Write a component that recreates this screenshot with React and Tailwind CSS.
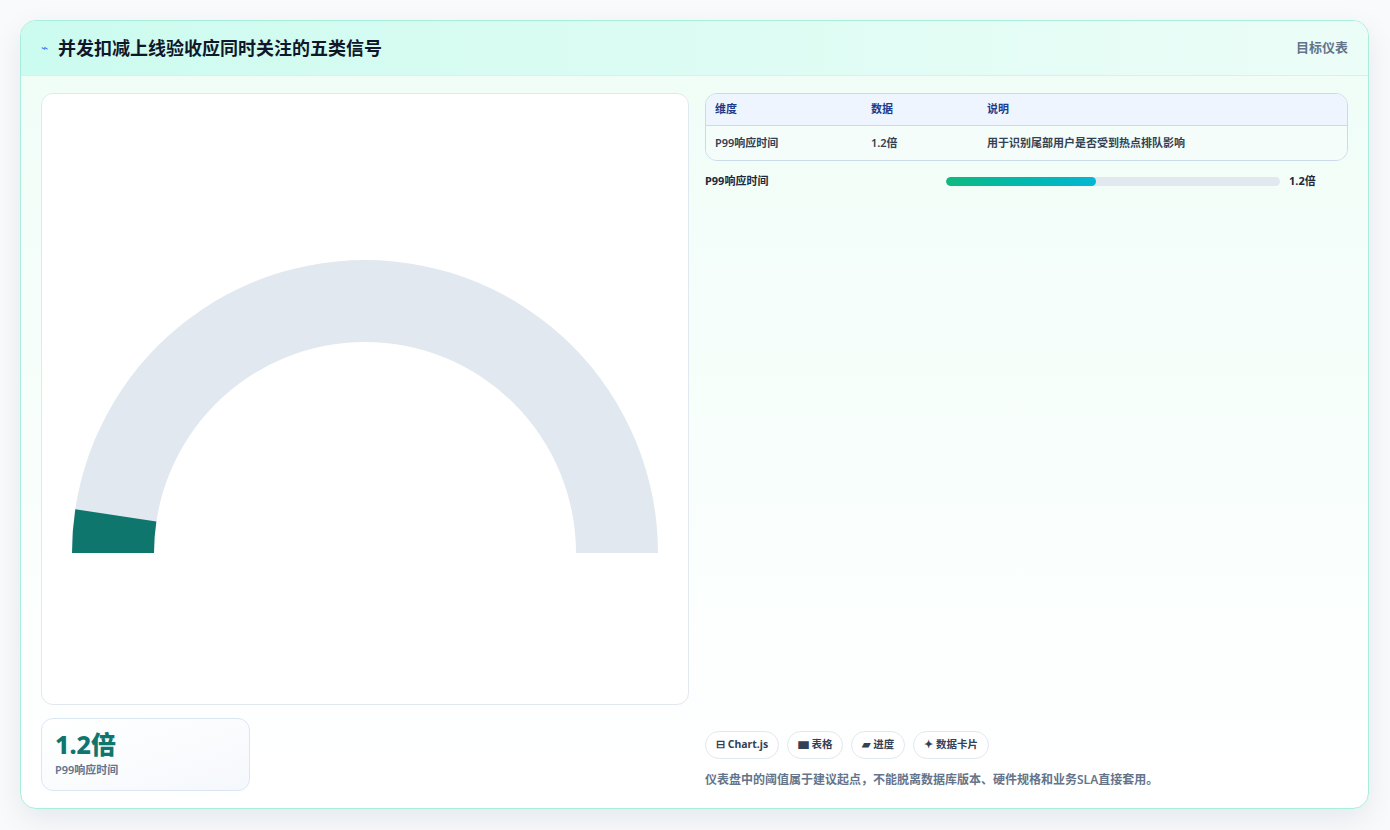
import React from 'react';

const font = { fontFamily: '"Noto Sans", "Noto Sans CJK SC", sans-serif' };

function arc(cx, cy, r1, r2, a0, a1) {
  // angles in degrees, 180 = left, 0 = right, measured on top half
  const p = (r, a) => [cx + r * Math.cos((a * Math.PI) / 180), cy - r * Math.sin((a * Math.PI) / 180)];
  const [x0, y0] = p(r2, a0);
  const [x1, y1] = p(r2, a1);
  const [x2, y2] = p(r1, a1);
  const [x3, y3] = p(r1, a0);
  return `M${x0} ${y0} A${r2} ${r2} 0 0 1 ${x1} ${y1} L${x2} ${y2} A${r1} ${r1} 0 0 0 ${x3} ${y3} Z`;
}

export default function App() {
  return (
    <div className="w-[1390px] h-[830px] bg-[#f8fafc] pt-5 pl-5" style={font}>
      <div className="w-[1349px] h-[789px] rounded-2xl border border-[#a7eedd] bg-gradient-to-b from-[#effdf7] to-white shadow-[0_10px_30px_rgba(15,23,42,0.08)] overflow-hidden flex flex-col">
        <div className="h-[55px] shrink-0 flex items-center justify-between px-5 bg-gradient-to-r from-[#ccfbef] to-[#ecfdf7] border-b border-[#d5f3ea]">
          <div className="flex items-center gap-2.5">
            <span className="text-[#3b82f6] text-xs">⌁</span>
            <h1 className="text-[18px] font-bold text-[#0f172a]">并发扣减上线验收应同时关注的五类信号</h1>
          </div>
          <span className="text-[13px] font-semibold text-[#64748b]">目标仪表</span>
        </div>
        <div className="flex-1 flex gap-4 px-5 pt-[17px]">
          <div className="w-[648px] flex flex-col">
            <div className="h-[612px] rounded-xl border border-[#e2e8f0] bg-white">
              <svg width="646" height="610" viewBox="0 0 646 610">
                <path d={arc(323, 459, 211, 293, 180, 0)} fill="#e2e8f0" />
                <path d={arc(323, 459, 211, 293, 180, 171.4)} fill="#0f766e" />
              </svg>
            </div>
            <div className="mt-[13px] w-[209px] h-[73px] rounded-xl border border-[#dbe6f3] bg-gradient-to-br from-white to-[#f5f8fc] px-[13px] pt-[10px]">
              <div className="text-[25px] leading-[30px] font-extrabold text-[#0f766e]">1.2倍</div>
              <div className="text-[11px] font-semibold text-[#64748b] mt-[3px]">P99响应时间</div>
            </div>
          </div>
          <div className="flex-1 flex flex-col">
            <div className="rounded-xl border border-[#cbd9ea] overflow-hidden text-[11px]">
              <div className="h-[32px] flex items-center bg-[#eef5fe] border-b border-[#cbd9ea] font-bold text-[#1e3a8a] px-[9px]">
                <span className="w-[156px]">维度</span><span className="w-[116px]">数据</span><span>说明</span>
              </div>
              <div className="h-[34px] flex items-center px-[9px] font-semibold text-[#334155] bg-[#f4fdf9]">
                <span className="w-[156px]">P99响应时间</span><span className="w-[116px]">1.2倍</span><span>用于识别尾部用户是否受到热点排队影响</span>
              </div>
            </div>
            <div className="mt-[12px] flex items-center text-[11px] font-bold text-[#1e293b]">
              <span className="w-[241px]">P99响应时间</span>
              <div className="w-[334px] h-[9px] rounded-full bg-[#e2e8f0] overflow-hidden">
                <div className="h-full w-[45%] rounded-full bg-gradient-to-r from-[#10b981] to-[#06b6d4]" />
              </div>
              <span className="ml-[9px]">1.2倍</span>
            </div>
            <div className="flex-1" />
            <div className="flex gap-2 mb-[12px]">
              {['⊟ Chart.js', '▆ 表格', '▰ 进度', '✦ 数据卡片'].map((t) => (
                <span key={t} className="h-[28px] px-[10px] flex items-center rounded-full border border-[#e2e8f0] bg-white text-[10.5px] font-bold text-[#334155]">{t}</span>
              ))}
            </div>
            <p className="text-[12px] font-semibold text-[#64748b] mb-[19px]">仪表盘中的阈值属于建议起点，不能脱离数据库版本、硬件规格和业务SLA直接套用。</p>
          </div>
        </div>
      </div>
    </div>
  );
}
